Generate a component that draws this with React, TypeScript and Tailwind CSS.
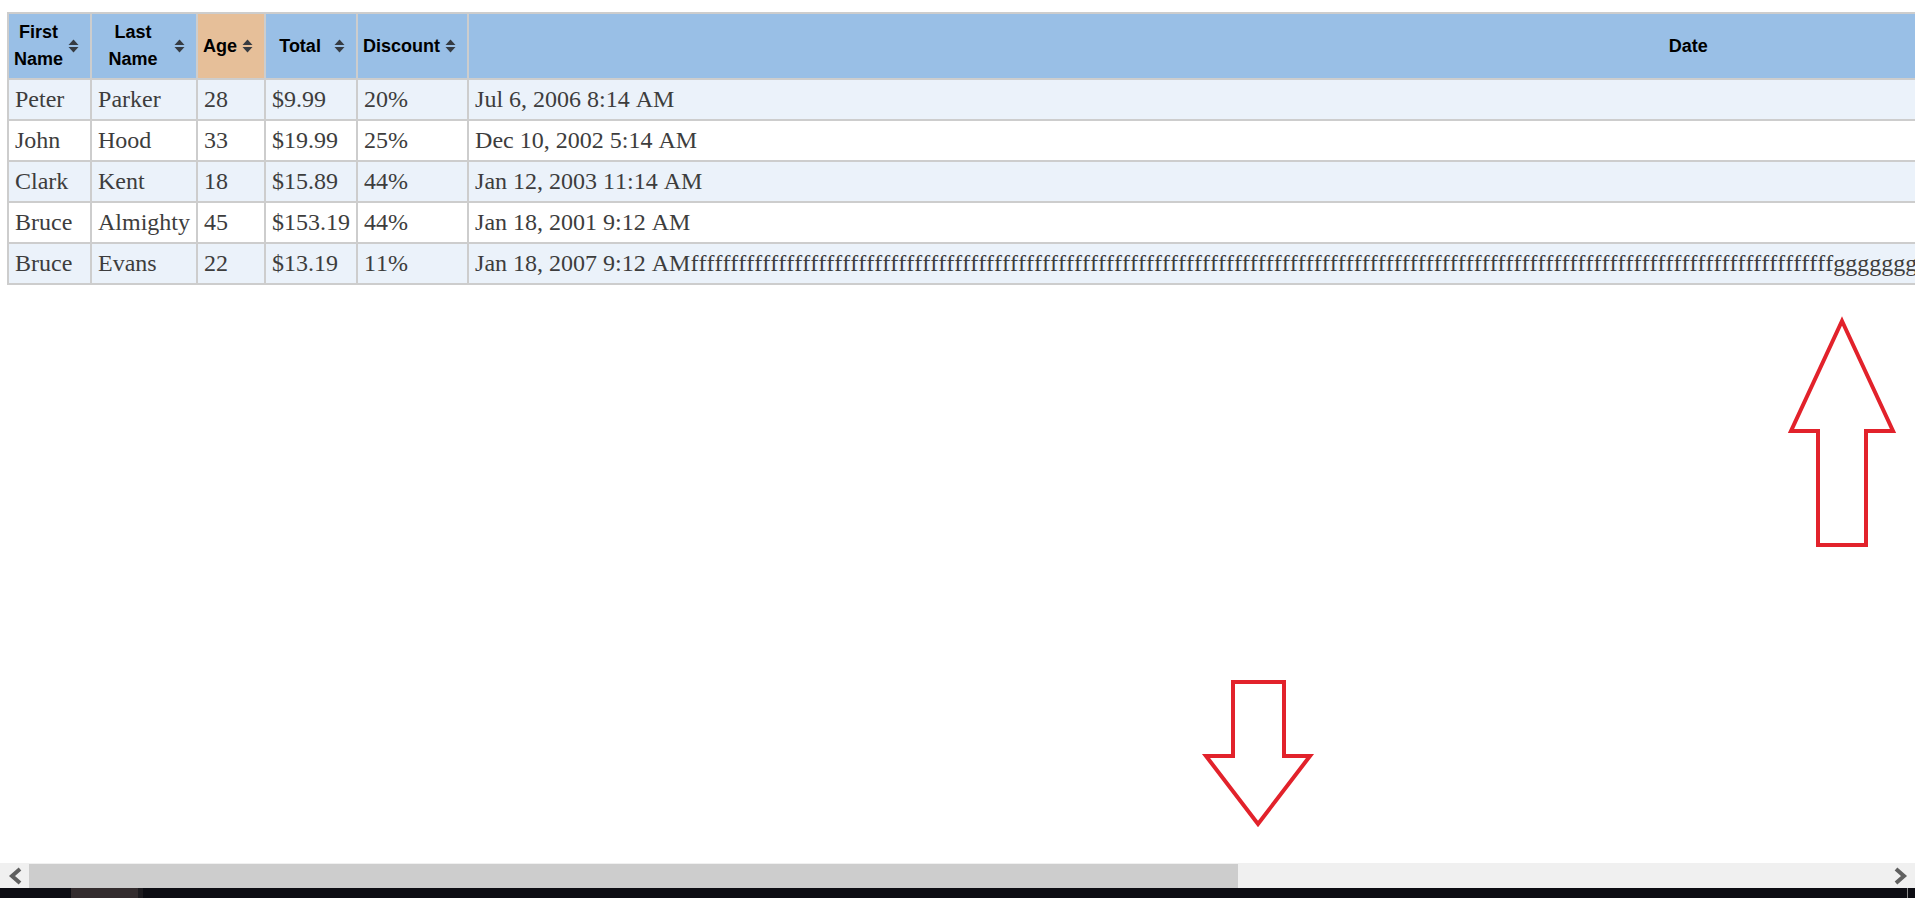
import React from 'react';

type Row = {
  first: string;
  last: string;
  age: number;
  total: string;
  discount: string;
  date: string;
};

const longTail = 'f'.repeat(143) + 'g'.repeat(89);

const rows: Row[] = [
  { first: 'Peter', last: 'Parker', age: 28, total: '$9.99', discount: '20%', date: 'Jul 6, 2006 8:14 AM' },
  { first: 'John', last: 'Hood', age: 33, total: '$19.99', discount: '25%', date: 'Dec 10, 2002 5:14 AM' },
  { first: 'Clark', last: 'Kent', age: 18, total: '$15.89', discount: '44%', date: 'Jan 12, 2003 11:14 AM' },
  { first: 'Bruce', last: 'Almighty', age: 45, total: '$153.19', discount: '44%', date: 'Jan 18, 2001 9:12 AM' },
  { first: 'Bruce', last: 'Evans', age: 22, total: '$13.19', discount: '11%', date: 'Jan 18, 2007 9:12 AM' + longTail },
];

function SortIcon() {
  return (
    <svg
      width="11"
      height="14"
      viewBox="0 0 11 14"
      className="absolute right-[11px] top-1/2 -translate-y-1/2"
    >
      <path d="M0.5 6 L5.5 0.5 L10.5 6 Z" fill="#363b42" />
      <path d="M0.5 8 L5.5 13.5 L10.5 8 Z" fill="#363b42" />
    </svg>
  );
}

const thBase =
  "relative border-2 border-[#cdcdcd] pl-[5px] pr-[27px] py-[5px] text-center align-middle font-bold text-[18px] leading-[27px] text-black font-['Liberation_Sans',Arial,sans-serif]";
const tdBase =
  "border-2 border-[#cdcdcd] px-[6px] py-[6px] text-left whitespace-nowrap text-[24px] leading-[27px] text-[#3d3d3d] [font-variant-ligatures:none] [font-kerning:none] font-['Liberation_Serif','Times_New_Roman',serif]";

export default function App() {
  return (
    <div className="flex h-[898px] w-[1915px] flex-col overflow-hidden bg-white">
      {/* page content */}
      <div className="relative min-h-0 flex-1 overflow-hidden pl-[7px] pt-[12px]">
        <table className="border-collapse">
          <thead>
            <tr>
              <th className={`${thBase} w-[87px] bg-[#99bfe6]`}>
                First Name
                <SortIcon />
              </th>
              <th className={`${thBase} w-[107px] bg-[#99bfe6]`}>
                Last Name
                <SortIcon />
              </th>
              <th className={`${thBase} w-[70px] bg-[#e6bf99]`}>
                Age
                <SortIcon />
              </th>
              <th className={`${thBase} w-[92px] bg-[#99bfe6]`}>
                Total
                <SortIcon />
              </th>
              <th className={`${thBase} w-[113px] bg-[#99bfe6]`}>
                Discount
                <SortIcon />
              </th>
              <th className="border-2 border-[#cdcdcd] bg-[#99bfe6] px-[5px] py-[5px] text-center align-middle font-['Liberation_Sans',Arial,sans-serif] text-[18px] font-bold leading-[27px] text-black">
                Date
              </th>
            </tr>
          </thead>
          <tbody>
            {rows.map((r, i) => (
              <tr key={i} className={i % 2 === 0 ? 'bg-[#ebf2fa]' : 'bg-white'}>
                <td className={tdBase}>{r.first}</td>
                <td className={tdBase}>{r.last}</td>
                <td className={tdBase}>{r.age}</td>
                <td className={tdBase}>{r.total}</td>
                <td className={tdBase}>{r.discount}</td>
                <td className={tdBase}>{r.date}</td>
              </tr>
            ))}
          </tbody>
        </table>

        {/* annotation arrows */}
        <svg
          className="pointer-events-none absolute left-0 top-0"
          width="1915"
          height="863"
          viewBox="0 0 1915 863"
        >
          <polygon
            points="1842,321 1893,431 1866,431 1866,545 1818,545 1818,431 1791,431"
            fill="none"
            stroke="#e2222b"
            strokeWidth="4"
            strokeLinejoin="miter"
          />
          <polygon
            points="1233,682 1284,682 1284,756 1310,756 1258,824 1206,756 1233,756"
            fill="none"
            stroke="#e2222b"
            strokeWidth="4"
            strokeLinejoin="miter"
          />
        </svg>
      </div>

      {/* horizontal scrollbar */}
      <div className="flex h-[25px] shrink-0 items-stretch bg-[#f0f0f0] pt-[1px]">
        <div className="flex w-[29px] items-center justify-center">
          <svg width="16" height="18" viewBox="0 0 16 18">
            <polyline points="13,2 5,9 13,16" fill="none" stroke="#606060" strokeWidth="4" />
          </svg>
        </div>
        <div className="w-[1209px] bg-[#cdcdcd]" />
        <div className="flex-1" />
        <div className="flex w-[29px] items-center justify-center">
          <svg width="16" height="18" viewBox="0 0 16 18">
            <polyline points="3,2 11,9 3,16" fill="none" stroke="#606060" strokeWidth="4" />
          </svg>
        </div>
      </div>

      {/* taskbar strip */}
      <div className="flex h-[10px] shrink-0 bg-[#0d0d13]">
        <div className="ml-[71px] w-[67px] bg-[#332c2e]" />
        <div className="w-[5px] bg-[#1d1b1f]" />
        <div className="flex-1" />
        <div className="mr-[7px] w-[1px] bg-[#8a8a8a]" />
      </div>
    </div>
  );
}
